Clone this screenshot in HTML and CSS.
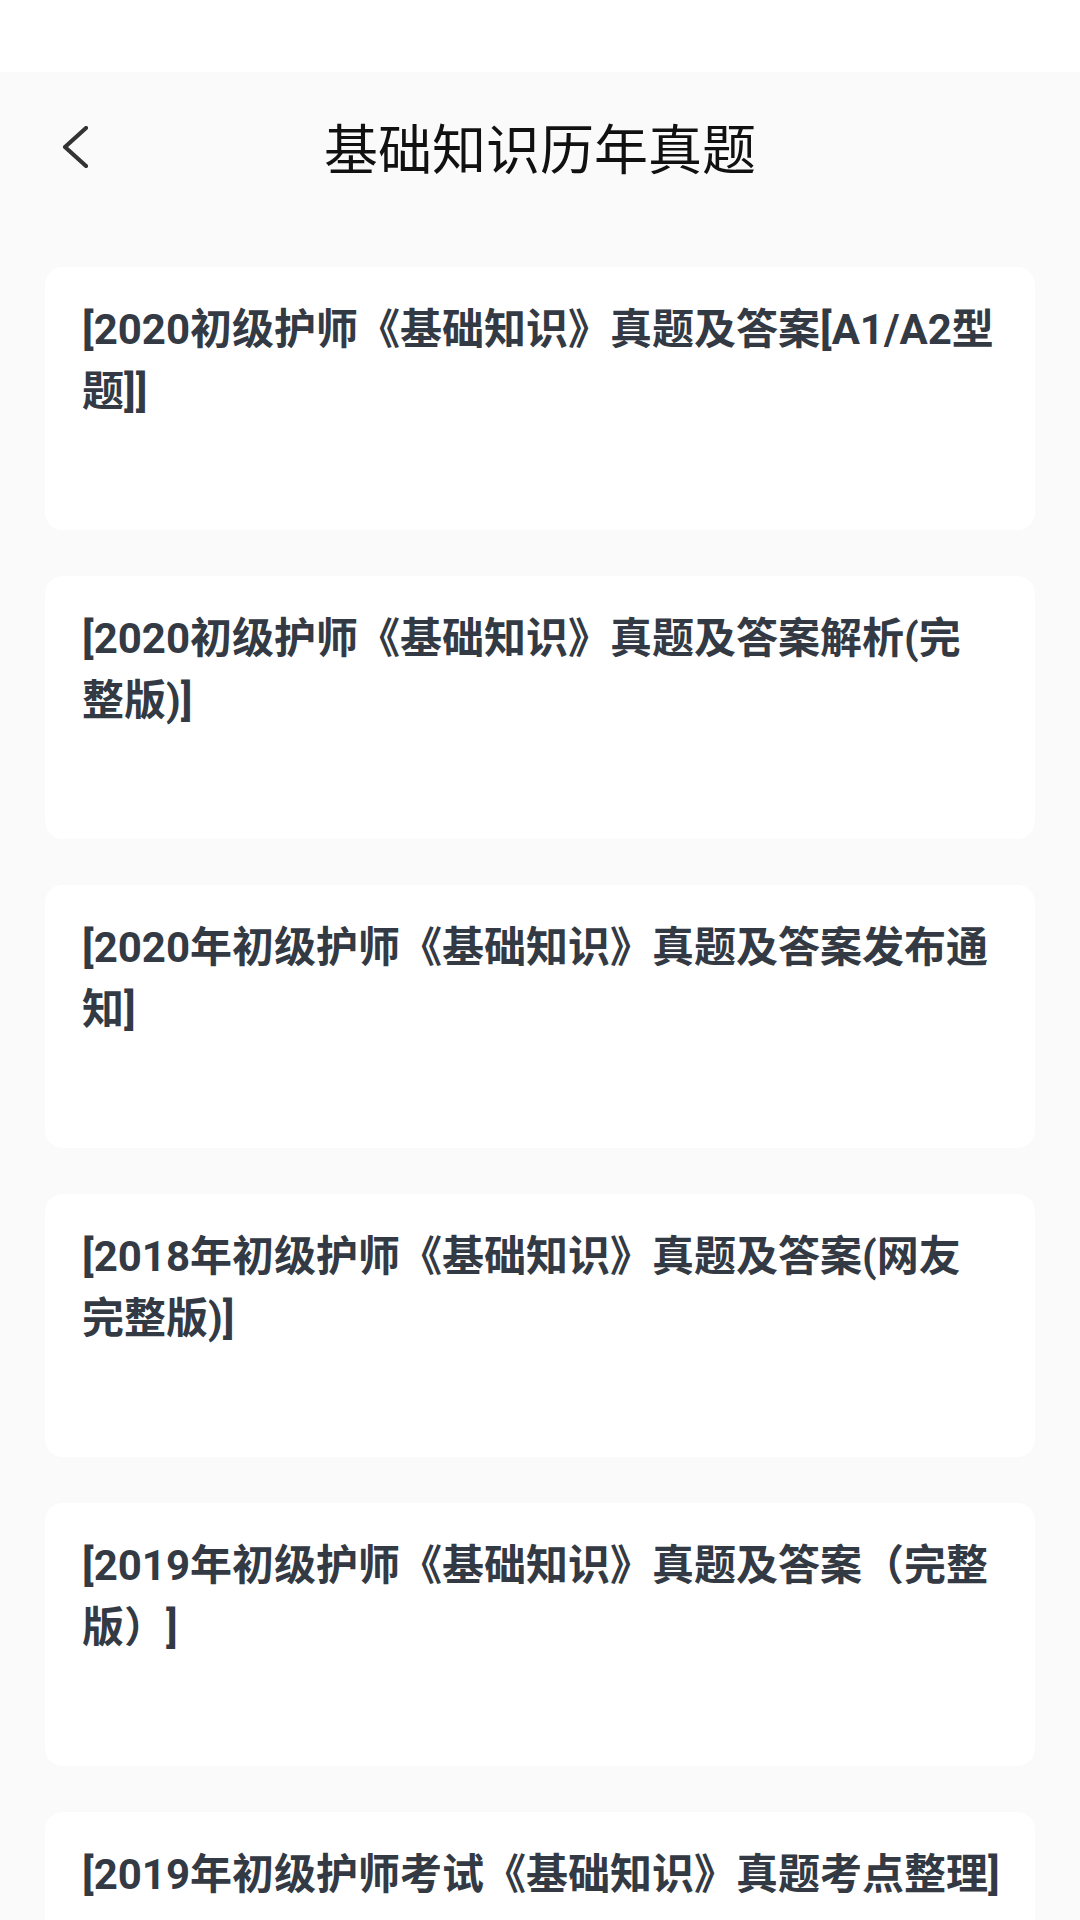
FILE: index.html
```html
<!DOCTYPE html>
<html>
<head>
    <meta charset="UTF-8">
    <meta name="viewport" content="width=device-width, initial-scale=1.0">
    <title>基础知识历年真题</title>
    <link rel="stylesheet" href="styles.css">
</head>
<body>
    <div class="status-bar"></div>
    <div class="header">
        <button class="back-button" onclick="history.back()">
            <svg width="25" height="42" viewBox="0 0 25 42">
                <path d="M23 2 L2 21 L23 40" fill="none" stroke="#333" stroke-width="4.2" stroke-linecap="round" stroke-linejoin="round"/>
            </svg>
        </button>
        <h1>基础知识历年真题</h1>
        <div></div>
    </div>
    <div class="list">
        <div class="card"><p>[2020初级护师《基础知识》真题及答案[A1/A2型题]]</p></div>
        <div class="card"><p>[2020初级护师《基础知识》真题及答案解析(完整版)]</p></div>
        <div class="card"><p>[2020年初级护师《基础知识》真题及答案发布通知]</p></div>
        <div class="card"><p>[2018年初级护师《基础知识》真题及答案(网友完整版)]</p></div>
        <div class="card"><p>[2019年初级护师《基础知识》真题及答案（完整版）]</p></div>
        <div class="card"><p>[2019年初级护师考试《基础知识》真题考点整理]</p></div>
    </div>
</body>
</html>
```

FILE: styles.css
```css
body {
    margin: 0;
    padding: 0;
    background-color: #fafafa;
    font-family: Roboto, "Noto Sans CJK SC", sans-serif;
    text-spacing-trim: space-all;
}
.status-bar {
    height: 72px;
    background-color: #ffffff;
}
.header {
    height: 150px;
    display: grid;
    grid-template-columns: 1fr auto 1fr;
    align-items: center;
}
.header h1 {
    margin: 0;
    font-size: 54px;
    font-weight: normal;
    color: #111;
    font-family: "Noto Sans CJK SC", sans-serif;
    line-height: 1;
}
.back-button {
    justify-self: start;
    margin-left: 63px;
    padding: 0;
    border: none;
    background: none;
    display: flex;
    cursor: pointer;
}
.list {
    padding: 45px 45px 0;
    display: flex;
    flex-direction: column;
    gap: 46px;
}
.card {
    height: 263px;
    box-sizing: border-box;
    padding: 32px 34px 0 37px;
    background-color: #ffffff;
    border-radius: 18px;
}
.card p {
    margin: 0;
    font-size: 42px;
    line-height: 62px;
    font-weight: bold;
    color: #333a44;
}
```
